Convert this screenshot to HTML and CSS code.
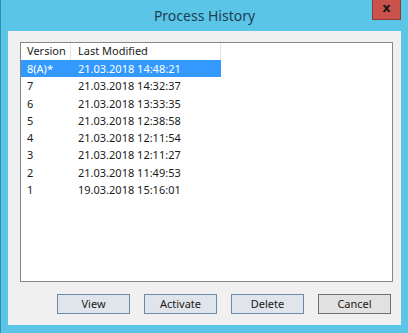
FILE: index.html
```html
<!DOCTYPE html>
<html lang="en">
<head>
    <meta charset="UTF-8">
    <title>Process History</title>
    <link rel="stylesheet" href="styles.css">
</head>
<body>
    <div class="window">
        <div class="titlebar">
            <span></span>
            <span class="title">Process History</span>
            <button class="close">x</button>
        </div>
        <div class="client">
            <div class="listbox">
                <div class="row header">
                    <div class="col version">Version</div>
                    <div class="col modified">Last Modified</div>
                </div>
                <div class="row selected">
                    <div class="col version">8(A)*</div>
                    <div class="col modified">21.03.2018 14:48:21</div>
                </div>
                <div class="row">
                    <div class="col version">7</div>
                    <div class="col modified">21.03.2018 14:32:37</div>
                </div>
                <div class="row">
                    <div class="col version">6</div>
                    <div class="col modified">21.03.2018 13:33:35</div>
                </div>
                <div class="row">
                    <div class="col version">5</div>
                    <div class="col modified">21.03.2018 12:38:58</div>
                </div>
                <div class="row">
                    <div class="col version">4</div>
                    <div class="col modified">21.03.2018 12:11:54</div>
                </div>
                <div class="row">
                    <div class="col version">3</div>
                    <div class="col modified">21.03.2018 12:11:27</div>
                </div>
                <div class="row">
                    <div class="col version">2</div>
                    <div class="col modified">21.03.2018 11:49:53</div>
                </div>
                <div class="row">
                    <div class="col version">1</div>
                    <div class="col modified">19.03.2018 15:16:01</div>
                </div>
            </div>
            <div class="buttons">
                <button class="btn blue">View</button>
                <button class="btn blue">Activate</button>
                <button class="btn blue">Delete</button>
                <button class="btn">Cancel</button>
            </div>
        </div>
    </div>
</body>
</html>
```

FILE: styles.css
```css
body {
    margin: 0;
    font-family: 'Noto Sans', 'Liberation Sans', sans-serif;
    font-size: 11px;
    color: #1a1a1a;
}

.window {
    width: 408px;
    height: 333px;
    box-sizing: border-box;
    background: #5bc5e8;
    border-left: 1px solid #2f8fb0;
    display: flex;
    flex-direction: column;
}

.titlebar {
    height: 31px;
    display: grid;
    grid-template-columns: 1fr auto 1fr;
    align-items: start;
}

.title {
    font-size: 14px;
    color: #1b3f52;
    margin-top: 6px;
}

.close {
    justify-self: end;
    width: 29px;
    height: 20px;
    margin-right: 7px;
    padding: 0 0 3px;
    background: #c9524a;
    border: 1px solid #8f3a35;
    border-top: none;
    color: #1a1a1a;
    font-family: 'DejaVu Sans', sans-serif;
    font-weight: bold;
    font-size: 13px;
    line-height: 16px;
}

.client {
    flex: 1;
    margin: 0 7px 8px 7px;
    background: #f0f0f0;
    padding: 11px 8px 0 12px;
}

.listbox {
    height: 240px;
    box-sizing: border-box;
    background: #fff;
    border: 1px solid #828790;
}

.row {
    display: flex;
    height: 17.25px;
    align-items: center;
}

.row.header {
    height: 17px;
}

.col {
    padding-left: 6px;
    box-sizing: border-box;
    white-space: nowrap;
}

.version {
    width: 50px;
}

.modified {
    width: 150px;
}

.header .col {
    height: 17px;
    line-height: 16px;
    border-right: 1px solid #e5e5e5;
}

.selected {
    background: #3399ff;
    color: #fff;
    width: 200px;
}

.row .modified {
    padding-left: 7px;
}

.buttons {
    display: flex;
    justify-content: flex-end;
    gap: 14px;
    margin-top: 12px;
    padding-right: 2px;
}

.btn {
    width: 73px;
    height: 20px;
    padding: 0;
    font-family: 'Noto Sans', 'Liberation Sans', sans-serif;
    font-size: 11px;
    line-height: 16px;
    color: #1a1a1a;
    background: #e1e1e1;
    border: 1px solid #707070;
}

.btn.blue {
    background: #dfe5eb;
    border-color: #6d8aa6;
}
```
